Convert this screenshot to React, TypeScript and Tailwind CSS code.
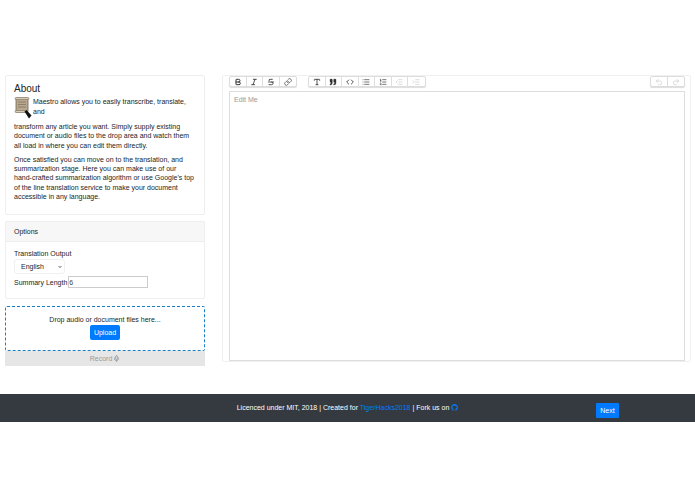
import {
  Bold,
  ChevronDown,
  Code,
  IndentDecrease,
  IndentIncrease,
  Italic,
  Link,
  List,
  ListOrdered,
  Mic,
  Quote,
  Redo2,
  Strikethrough,
  Undo2,
  Type,
} from "lucide-react";
import { FaGithub } from "react-icons/fa";
import type { ReactNode } from "react";

function ScrollLogo() {
  return (
    <svg viewBox="0 0 18 22" className="h-[22px] w-[18px] shrink-0">
      <rect x="2" y="1" width="12" height="14" rx="1" fill="#b8a88e" stroke="#6f6252" strokeWidth="0.8" />
      <rect x="1" y="0.5" width="14" height="2" rx="1" fill="#d8ccb6" stroke="#6f6252" strokeWidth="0.5" />
      <rect x="1" y="13.5" width="12" height="2" rx="1" fill="#d8ccb6" stroke="#6f6252" strokeWidth="0.5" />
      <path d="M4 5h8M4 7.500h8M4 10h8" stroke="#7d6f5c" strokeWidth="0.7" />
      <path d="M10.500 14.500l2-1.500 5 5.500-2.500 3z" fill="#111" />
    </svg>
  );
}

function ToolGroup({ children, className }: { children: ReactNode; className?: string }) {
  return <div className={`flex h-[11px] rounded-[2px] border border-[#ddd] bg-white shadow-[0_1px_1px_#ddd] ${className ?? ""}`}>{children}</div>;
}

function Tool({ children, last }: { children: ReactNode; last?: boolean }) {
  return (
    <div className={`flex h-full w-[16.500px] items-center justify-center ${last ? "" : "border-r border-[#ddd]"}`}>
      {children}
    </div>
  );
}

const icon = "size-[8px] text-[#333]";
const iconOff = "size-[8px] text-[#ccc]";

export default function App() {
  return (
    <div className="min-h-[494px] bg-white font-['Liberation_Sans',sans-serif] text-[7px] leading-[9.300px] text-[#212529]">
      <div className="flex h-[394px] pt-[75px]">
        {/* Left column */}
        <div className="ml-[5px] flex w-[200px] shrink-0 flex-col">
          <div className="h-[140px] rounded-[2px] border border-[#eee] px-[8px] pt-[7px]">
            <h5 className="text-[10px] leading-[12px]">About</h5>
            <div className="mt-[2px] flex items-end">
              <ScrollLogo />
              <span className="mb-[3px] ml-[1px]">Maestro allows you to easily transcribe, translate, and</span>
            </div>
            <p className="mt-[3px]">
              transform any article you want. Simply supply existing document or audio files to the drop area and watch them all load in where you can edit them directly.
            </p>
            <p className="mt-[5px]">
              Once satisfied you can move on to the translation, and summarization stage. Here you can make use of our hand-crafted summarization algorithm or use Google's top of the line translation service to make your document accessible in any language.
            </p>
          </div>

          <div className="mt-[6px] h-[78px] rounded-[2px] border border-[#eee]">
            <div className="flex h-[20px] items-center border-b border-[#eee] bg-[#f7f7f7] px-[8px]">Options</div>
            <div className="px-[8px] pt-[7px]">
              <div>Translation Output</div>
              <div className="mt-[1px] flex h-[15px] w-[51px] items-center justify-between rounded-[3px] border border-[#f0f0f0] pl-[6px] pr-[2px]">
                English
                <ChevronDown className="size-[4px] text-[#222]" strokeWidth={5} />
              </div>
              <div className="mt-[2px] flex items-center">
                <span>Summary Length</span>
                <div className="ml-[1px] flex h-[12px] w-[80px] items-center border border-[#ccc] text-[#444]">6</div>
              </div>
            </div>
          </div>

          <div className="mt-[7px] flex h-[45px] flex-col items-center rounded-[2px] border border-dashed border-[#1a7fc9] pt-[8px]">
            <div>Drop audio or document files here...</div>
            <div className="mt-[1px] flex h-[15px] w-[30px] items-center justify-center rounded-[2px] bg-[#007bff] text-white">Upload</div>
          </div>
          <div className="flex h-[15px] items-center justify-center gap-[1px] bg-[#e6e6e6] text-[#9a9a9a]">
            Record
            <Mic className="size-[7px]" strokeWidth={3} />
          </div>
        </div>

        {/* Editor */}
        <div className="ml-[17px] flex h-[287px] w-[469px] flex-col rounded-[2px] border border-[#f0f0f0] pl-[6px] pr-[5px]">
          <div className="flex h-[15px] items-start justify-between">
            <div className="flex gap-[11px]">
              <ToolGroup>
                <Tool><Bold className={icon} strokeWidth={3} /></Tool>
                <Tool><Italic className={icon} strokeWidth={2.500} /></Tool>
                <Tool><Strikethrough className={icon} strokeWidth={2.500} /></Tool>
                <Tool last><Link className={icon} strokeWidth={2} /></Tool>
              </ToolGroup>
              <ToolGroup>
                <Tool><Type className={icon} strokeWidth={2.500} /></Tool>
                <Tool><Quote className={icon} fill="#333" strokeWidth={1} /></Tool>
                <Tool><Code className={icon} strokeWidth={2.500} /></Tool>
                <Tool><List className={icon} strokeWidth={2} /></Tool>
                <Tool><ListOrdered className={icon} strokeWidth={2} /></Tool>
                <Tool><IndentDecrease className={iconOff} strokeWidth={2} /></Tool>
                <Tool last><IndentIncrease className={iconOff} strokeWidth={2} /></Tool>
              </ToolGroup>
            </div>
            <ToolGroup>
              <Tool><Undo2 className={iconOff} strokeWidth={2} /></Tool>
              <Tool last><Redo2 className={iconOff} strokeWidth={2} /></Tool>
            </ToolGroup>
          </div>
          <div className="h-[270px] border border-[#ddd] px-[4px] pt-[3px] text-[#999]">Edit Me</div>
        </div>
      </div>

      {/* Footer */}
      <div className="relative flex h-[28px] items-center justify-center bg-[#343a40] text-white">
        <span className="flex items-center gap-[2px]">
          <span>
            Licenced under MIT, 2018 | Created for <span className="text-[#007bff]">TigerHacks2018</span> | Fork us on
          </span>
          <FaGithub className="size-[7px] text-[#007bff]" />
        </span>
        <div className="absolute left-[596px] top-[9px] flex h-[15px] w-[23px] items-center justify-center rounded-[1px] bg-[#007bff]">Next</div>
      </div>
    </div>
  );
}
